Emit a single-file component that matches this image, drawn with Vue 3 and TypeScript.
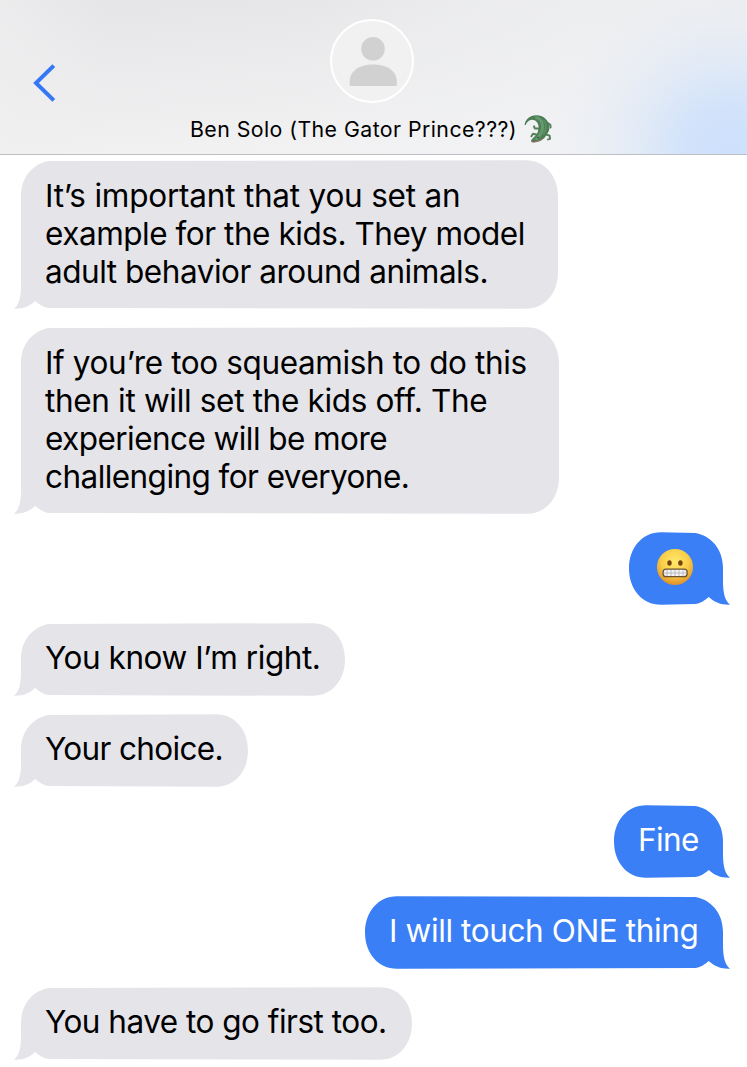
<script setup lang="ts">
interface Line {
  text: string
  spacing: number
}
interface Message {
  id: number
  mine: boolean
  width: number
  height: number
  lines?: Line[]
  emoji?: boolean
}

const messages: Message[] = [
  {
    id: 1, mine: false, width: 537, height: 149,
    lines: [
      { text: 'It’s important that you set an', spacing: -0.22 },
      { text: 'example for the kids. They model', spacing: -0.46 },
      { text: 'adult behavior around animals.', spacing: -0.47 },
    ],
  },
  {
    id: 2, mine: false, width: 538, height: 187,
    lines: [
      { text: 'If you’re too squeamish to do this', spacing: -0.39 },
      { text: 'then it will set the kids off. The', spacing: -0.33 },
      { text: 'experience will be more', spacing: -0.56 },
      { text: 'challenging for everyone.', spacing: -0.56 },
    ],
  },
  { id: 3, mine: true, width: 94, height: 73, emoji: true },
  { id: 4, mine: false, width: 324, height: 73, lines: [{ text: 'You know I’m right.', spacing: -0.45 }] },
  { id: 5, mine: false, width: 227, height: 73, lines: [{ text: 'Your choice.', spacing: -0.65 }] },
  { id: 6, mine: true, width: 109, height: 73, lines: [{ text: 'Fine', spacing: -0.65 }] },
  { id: 7, mine: true, width: 358, height: 73, lines: [{ text: 'I will touch ONE thing', spacing: -0.39 }] },
  { id: 8, mine: false, width: 391, height: 73, lines: [{ text: 'You have to go first too.', spacing: -0.5 }] },
]

// Outline with the tail at the lower left; outgoing bubbles mirror it.
function outline(w: number, h: number): string {
  const r = w + 7
  return [
    `M7 36 C7 17 19 3.5 35 1`,
    `L${r - 32} 0.2 C${r - 13} 0.2 ${r} 16 ${r} 36.5`,
    `L${r} ${h - 36.5} C${r} ${h - 16} ${r - 13} ${h - 0.2} ${r - 32} ${h - 0.2}`,
    `L35 ${h - 1} C30 ${h - 1.5} 25 ${h - 4.5} 21.3 ${h - 8}`,
    `C15 ${h - 2.5} 9 ${h} 0 ${h - 0.3}`,
    `C5 ${h - 4} 7 ${h - 12} 7 ${h - 24} Z`,
  ].join(' ')
}
</script>

<template>
  <div class="screen">
    <header class="header">
      <svg class="back" width="24" height="40" viewBox="0 0 24 40">
        <path d="M21.8 2.6 4 20 21.8 37.4" />
      </svg>
      <div class="contact">
        <svg class="avatar" width="84" height="84" viewBox="0 0 84 84">
          <circle cx="42" cy="42" r="41" fill="#f1f1f2" stroke="#fff" stroke-width="2" />
          <circle cx="43" cy="29.8" r="11.8" fill="#d1d1d2" />
          <path d="M19.7 67V62C20 51 31 45.6 43.2 45.6S66.5 51 66.8 62V67Z" fill="#d1d1d2" />
        </svg>
        <div class="name">
          <span class="name-text">Ben Solo (The Gator Prince???)</span>
          <svg class="gator" width="28" height="29" viewBox="0 0 28 29">
            <path d="M23 7.5 26.3 9.8 26.6 12.4M22 19.5 25.6 20.6 26 23.8 24 24.4M14 20 9 18.8 7.4 21.2M14.8 13.6 10.8 13.4 10 11.4" fill="none" stroke="#55805a" stroke-width="2" stroke-linejoin="round" stroke-linecap="round" />
            <path d="M0.5 9.8C1.2 6 3.5 2.8 7.7 1.1 10.8 0 14.5 0.1 17.7 1.3 22 3 25 7.5 25.4 12.5 25.5 16.5 23 18.8 21 22.2 18.5 25.5 12.5 28 8 27.3 6.4 26.6 7 24.8 8.8 23.2L12.5 19.5C14.2 17 14.4 14.5 14.6 12.5 14.6 8.5 12.5 5.4 9.3 4.9 6.5 4.4 3.2 6.2 1.5 10.2Z" fill="#4c7d55" />
            <path d="M12.5 2.6C16 3.6 18.3 7 18.6 11 18.8 16 16.5 20 12.5 24" fill="none" stroke="#659a6c" stroke-width="3" stroke-linecap="round" />
            <path d="M20 5.5C22.8 9.5 22.4 14.5 19.2 19" fill="none" stroke="#5a9062" stroke-width="1.8" stroke-linecap="round" />
            <path d="M8.3 26.8C12 27 15.8 25.6 18.5 23.4" fill="none" stroke="#a0655a" stroke-width=".9" />
            <circle cx="14" cy="22.6" r=".8" fill="#263c2a" />
          </svg>
        </div>
      </div>
    </header>

    <main class="thread">
      <div
        v-for="m in messages"
        :key="m.id"
        class="bubble"
        :class="{ mine: m.mine, multi: m.lines && m.lines.length > 1 }"
        :style="{ width: m.width + 'px', height: m.height + 'px' }"
      >
        <svg class="shape" :width="m.width + 7" :height="m.height" :viewBox="`0 0 ${m.width + 7} ${m.height}`">
          <path :d="outline(m.width, m.height)" />
        </svg>
        <svg v-if="m.emoji" class="emoji" width="38" height="38" viewBox="0 0 38 38">
          <defs>
            <radialGradient id="face" cx="50%" cy="35%" r="66%">
              <stop offset="0" stop-color="#ffe96c" />
              <stop offset=".55" stop-color="#fbcf49" />
              <stop offset="1" stop-color="#dd8d28" />
            </radialGradient>
          </defs>
          <circle cx="19" cy="19" r="18.1" fill="url(#face)" />
          <ellipse cx="13.5" cy="15" rx="2.2" ry="2.8" fill="#74410f" />
          <ellipse cx="24.4" cy="15" rx="2.2" ry="2.8" fill="#74410f" />
          <rect x="7.1" y="21.1" width="24" height="7.6" rx="3" fill="#f4f4f4" stroke="#6b5233" stroke-width="1.3" />
          <path d="M8 25H30.2M11 22V28M15 22V28M19 22V28M23 22V28M27 22V28" stroke="#b0b0b5" stroke-width=".8" />
        </svg>
        <p v-else class="text">
          <span v-for="line in m.lines" :key="line.text" class="line" :style="{ letterSpacing: line.spacing + 'px' }">{{ line.text }}</span>
        </p>
      </div>
    </main>
  </div>
</template>

<style>
body {
  margin: 0;
  background: #fff;
}
</style>

<style scoped>
.screen {
  width: 747px;
  height: 1067px;
  overflow: hidden;
  background: #fff;
  font-family: Inter, "Liberation Sans", sans-serif;
}
.header {
  display: flex;
  box-sizing: border-box;
  height: 155px;
  border-bottom: 1px solid #bfbfc3;
  background:
    radial-gradient(ellipse 180px 165px at 730px 148px, #cde0fc 0%, #cfe1fbe6 25%, #d6e5f999 50%, #dfe9f744 75%, #e9edf300 100%),
    linear-gradient(100deg, #f0f1f300 40%, #f0f1f3aa 75%),
    linear-gradient(90deg, #f0f0f199 0, #f1f1f200 110px),
    linear-gradient(175deg, #e5e5e7, #f3f3f4 88%);
}
.back {
  flex: none;
  margin: 63px 0 0 32px;
}
.back path {
  fill: none;
  stroke: #3478f6;
  stroke-width: 4;
}
.contact {
  display: flex;
  flex-direction: column;
  width: 632px;
  margin-left: -1px;
  align-items: center;
}
.avatar {
  margin: 19px 0 0 2px;
}
.name {
  display: flex;
  align-items: center;
  height: 30px;
  margin-top: 11px;
}
.name-text {
  font-size: 21.3px;
  line-height: 30px;
  letter-spacing: 0.44px;
  white-space: nowrap;
}
.gator {
  margin-left: 7px;
}
.thread {
  display: flex;
  flex-direction: column;
  align-items: flex-start;
  gap: 18px;
  padding: 5px 24px 0 21px;
}
.bubble {
  display: grid;
  position: relative;
  flex: none;
  align-items: center;
  color: #000;
}
.bubble.mine {
  align-self: flex-end;
  color: #fff;
}
.shape {
  position: absolute;
  top: 0;
  left: -7px;
  fill: #e5e4e9;
}
.mine .shape {
  left: 0;
  fill: #3a7ff5;
  transform: scaleX(-1);
}
.text {
  position: relative;
  margin: 0 0 0 24px;
  padding-bottom: 3px;
}
.multi .text {
  padding-bottom: 1px;
}
.line {
  display: block;
  font-size: 31.5px;
  line-height: 38px;
  white-space: pre;
}
.emoji {
  position: relative;
  margin: 0 0 3px 27px;
}
</style>
